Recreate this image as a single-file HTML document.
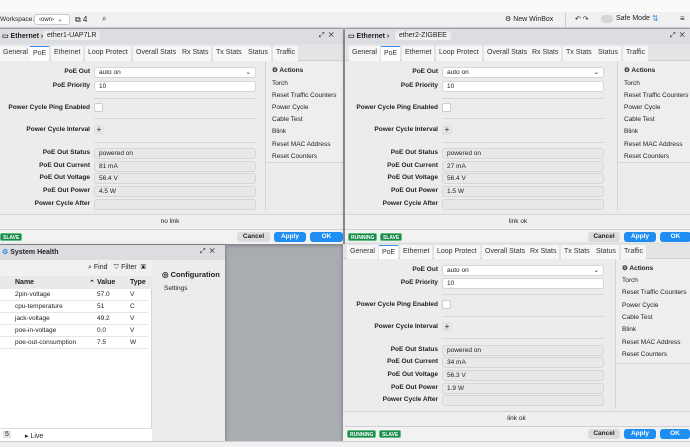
<!DOCTYPE html><html><head><meta charset="utf-8"><style>
*{box-sizing:border-box;margin:0;padding:0}
body{width:690px;height:447px;overflow:hidden;background:#a9adb2;font-family:"Liberation Sans",sans-serif;font-size:7px;color:#222;position:relative}
.a{position:absolute}
.win{position:absolute;width:346px;background:#ececed;box-shadow:0 1px 4px rgba(0,0,0,.35);overflow:hidden}
.tb{position:absolute;left:0;right:0;top:0;height:15px;background:#dcdde0;}
.tabs{position:absolute;left:0;right:0;height:17px;background:#e3e4e6;border-bottom:1px solid #d0d0d3}
.tab{position:absolute;top:2px;height:15px;line-height:14px;background:#f6f6f7;padding:0 3px;font-size:7px;color:#333}
.tab.on{background:#fff;border-top:1px solid #3a8ee6}
.lbl{position:absolute;right:253px;font-weight:bold;font-size:6.5px;text-align:right;white-space:nowrap;color:#222}
.f{position:absolute;left:97px;width:162px;height:11px;border:1px solid #d6d6d8;border-radius:3px;background:#e8e8e9;padding-left:4px;line-height:10px;font-size:6.5px}
.f.w{background:#fff}
.ln{position:absolute;left:97px;width:162px;height:1px;background:#d8d8da}
.act{position:absolute;left:268px;width:80px;border-left:1px solid #d5d5d7;border-bottom:1px solid #d5d5d7;background:#eeeeef}
.act div{position:absolute;left:6px;font-size:6.5px;white-space:nowrap}
.st{position:absolute;left:0;right:0;height:15px;border-top:1px solid #d6d6d8;text-align:center;line-height:14px;font-size:6.5px;background:#efeff0}
.ft{position:absolute;left:0;right:0;height:15px;border-top:1px solid #d0d0d2;background:#f2f2f3}
.btn{position:absolute;top:2px;height:10px;border-radius:3px;font-weight:bold;font-size:6.5px;text-align:center;line-height:10px;color:#fff;background:#1e8ef2}
.btn.c{background:#dcdcde;color:#222}
.bd{position:absolute;top:3px;height:8px;border-radius:2px;background:#1a8a4a;color:#fff;font-size:5px;font-weight:bold;line-height:8px;padding:0 2px;border:1px solid #5fbf83}
.chk{position:absolute;left:97px;width:9px;height:9px;background:#fff;border:1px solid #ccc;border-radius:2px}
.plus{position:absolute;left:97px;width:10px;height:10px;background:#e4e4e6;border-radius:2px;text-align:center;line-height:10px;font-size:8px}
</style></head><body>
<div class="a" style="left:0;top:0;width:690px;height:12px;background:#fafafa"></div>
<div class="a" style="left:0;top:12px;width:690px;height:16px;background:#f1f1f3;border-bottom:1px solid #d8d8da"></div>
<div class="a" style="left:0;top:16px;font-size:6.5px">Workspace:</div>
<div class="a" style="left:34px;top:14px;width:36px;height:11px;background:#fff;border:1px solid #ccc;border-radius:3px;font-size:6px;padding-left:4px;line-height:10px">‹own› &nbsp;⌄</div>
<div class="a" style="left:75px;top:15px;font-size:8px">⧉ 4</div>
<div class="a" style="left:102px;top:14px;font-size:8px">⌕</div>
<div class="a" style="left:505px;top:15px;font-size:7px">⚙ New WinBox</div>
<div class="a" style="left:565px;top:13px;width:1px;height:14px;background:#ccc"></div>
<div class="a" style="left:575px;top:15px;font-size:7px">↶ ↷</div>
<div class="a" style="left:601px;top:15px;width:12px;height:8px;border-radius:4px;background:#d6d6d8"></div>
<div class="a" style="left:616px;top:15px;font-size:7px">Safe Mode</div>
<div class="a" style="left:652px;top:14px;font-size:8px;color:#3a8ee6">⇅</div>
<div class="a" style="left:680px;top:14px;font-size:8px">≡</div>

<!-- win1 -->
<div class="win" style="left:-3px;top:29px;height:215px">
<div class="tb"><span class="a" style="left:5px;top:3px;font-weight:bold">▭ Ethernet ›</span><span class="a" style="left:46px;top:2px;background:#eee;padding:1px 4px;border-radius:3px">ether1-UAP7LR</span><span class="a" style="left:322px;top:3px">⤢ &nbsp;✕</span></div>
<div class="tabs" style="top:15px">
<div class="tab" style="left:3px">General</div><div class="tab on" style="left:33px">PoE</div><div class="tab" style="left:54px">Ethernet</div><div class="tab" style="left:88px">Loop Protect</div><div class="tab" style="left:136px">Overall Stats</div><div class="tab" style="left:182px">Rx Stats</div><div class="tab" style="left:216px">Tx Stats</div><div class="tab" style="left:248px">Status</div><div class="tab" style="left:276px">Traffic</div></div>
<div class="a" style="left:0;top:32px;width:346px;height:150px">
<div class="lbl" style="top:7px">PoE Out</div><div class="f w" style="top:6px">auto on<span style="float:right;margin-right:4px">⌄</span></div>
<div class="lbl" style="top:21px">PoE Priority</div><div class="f w" style="top:20px">10</div>
<div class="ln" style="top:37px"></div>
<div class="lbl" style="top:43px">Power Cycle Ping Enabled</div><div class="chk" style="top:42px"></div>
<div class="ln" style="top:57px"></div>
<div class="lbl" style="top:65px">Power Cycle Interval</div><div class="plus" style="top:64px">+</div>
<div class="ln" style="top:81px"></div>
<div class="lbl" style="top:88px">PoE Out Status</div><div class="f" style="top:87px">powered on</div>
<div class="lbl" style="top:101px">PoE Out Current</div><div class="f" style="top:100px">81 mA</div>
<div class="lbl" style="top:113px">PoE Out Voltage</div><div class="f" style="top:112px">56.4 V</div>
<div class="lbl" style="top:126px">PoE Out Power</div><div class="f" style="top:125px">4.5 W</div>
<div class="lbl" style="top:139px">Power Cycle After</div><div class="f" style="top:138px"></div>
<div class="act" style="top:0;height:102px"><div style="top:5px;font-weight:bold">⚙ Actions</div><div style="top:19px">Torch</div><div style="top:31px">Reset Traffic Counters</div><div style="top:43px">Power Cycle</div><div style="top:55px">Cable Test</div><div style="top:67px">Blink</div><div style="top:80px">Reset MAC Address</div><div style="top:92px">Reset Counters</div></div>
<div class="a" style="left:268px;top:102px;width:1px;height:48px;background:#d5d5d7"></div>
</div>
<div class="st" style="top:185px">no link</div>
<div class="ft" style="top:200px"><div class="bd" style="left:3px">SLAVE</div><div class="btn c" style="left:240px;width:33px">Cancel</div><div class="btn" style="left:277px;width:32px">Apply</div><div class="btn" style="left:313px;width:33px">OK</div></div>
</div>

<!-- win2 -->
<div class="win" style="left:345px;top:29px;height:215px">
<div class="tb"><span class="a" style="left:3px;top:3px;font-weight:bold">▭ Ethernet ›</span><span class="a" style="left:50px;top:2px;background:#eee;padding:1px 4px;border-radius:3px">ether2-ZIGBEE</span><span class="a" style="left:325px;top:3px">⤢ &nbsp;✕</span></div>
<div class="tabs" style="top:15px">
<div class="tab" style="left:4px">General</div><div class="tab on" style="left:36px">PoE</div><div class="tab" style="left:57px">Ethernet</div><div class="tab" style="left:91px">Loop Protect</div><div class="tab" style="left:139px">Overall Stats</div><div class="tab" style="left:184px">Rx Stats</div><div class="tab" style="left:218px">Tx Stats</div><div class="tab" style="left:250px">Status</div><div class="tab" style="left:278px">Traffic</div></div>
<div class="a" style="left:0;top:32px;width:346px;height:150px">
<div class="lbl" style="top:7px">PoE Out</div><div class="f w" style="top:6px">auto on<span style="float:right;margin-right:4px">⌄</span></div>
<div class="lbl" style="top:21px">PoE Priority</div><div class="f w" style="top:20px">10</div>
<div class="ln" style="top:37px"></div>
<div class="lbl" style="top:43px">Power Cycle Ping Enabled</div><div class="chk" style="top:42px"></div>
<div class="ln" style="top:57px"></div>
<div class="lbl" style="top:65px">Power Cycle Interval</div><div class="plus" style="top:64px">+</div>
<div class="ln" style="top:81px"></div>
<div class="lbl" style="top:88px">PoE Out Status</div><div class="f" style="top:87px">powered on</div>
<div class="lbl" style="top:101px">PoE Out Current</div><div class="f" style="top:100px">27 mA</div>
<div class="lbl" style="top:113px">PoE Out Voltage</div><div class="f" style="top:112px">56.4 V</div>
<div class="lbl" style="top:126px">PoE Out Power</div><div class="f" style="top:125px">1.5 W</div>
<div class="lbl" style="top:139px">Power Cycle After</div><div class="f" style="top:138px"></div>
<div class="act" style="left:272px;top:0;height:102px"><div style="top:5px;font-weight:bold">⚙ Actions</div><div style="top:19px">Torch</div><div style="top:31px">Reset Traffic Counters</div><div style="top:43px">Power Cycle</div><div style="top:55px">Cable Test</div><div style="top:67px">Blink</div><div style="top:80px">Reset MAC Address</div><div style="top:92px">Reset Counters</div></div>
<div class="a" style="left:272px;top:102px;width:1px;height:48px;background:#d5d5d7"></div>
</div>
<div class="st" style="top:185px">link ok</div>
<div class="ft" style="top:200px"><div class="bd" style="left:3px">RUNNING</div><div class="bd" style="left:35px">SLAVE</div><div class="btn c" style="left:243px;width:32px">Cancel</div><div class="btn" style="left:279px;width:32px">Apply</div><div class="btn" style="left:315px;width:31px">OK</div></div>
</div>

<!-- system health -->
<div class="win" style="left:0;top:245px;width:225px;height:196px;background:#ececed">
<div class="tb"><span class="a" style="left:2px;top:3px;font-weight:bold"><span style="color:#3a8ee6">⚙</span> System Health</span><span class="a" style="left:200px;top:3px">⤢ &nbsp;✕</span></div>
<div class="a" style="left:0;top:15px;width:152px;height:168px;background:#fff;border-right:1px solid #d5d5d7">
<div class="a" style="left:0;top:0;width:152px;height:16px;background:#f1f1f2"></div>
<div class="a" style="left:88px;top:4px">⌕ Find &nbsp;&nbsp;▽ Filter &nbsp;▣</div>
<div class="a" style="left:0;top:16px;width:152px;height:13px;background:#e9e9ea;font-weight:bold"><span class="a" style="left:15px;top:3px">Name</span><span class="a" style="left:89px;top:3px">⌃</span><span class="a" style="left:97px;top:3px">Value</span><span class="a" style="left:130px;top:3px">Type</span></div>
<div class="a" style="left:0;top:29px;width:148px;font-size:6.5px">
<div style="height:12px;border-bottom:1px solid #e5e5e5;position:relative"><span class="a" style="left:15px;top:2px">2pin-voltage</span><span class="a" style="left:97px;top:2px">57.0</span><span class="a" style="left:130px;top:2px">V</span></div>
<div style="height:12px;border-bottom:1px solid #e5e5e5;position:relative"><span class="a" style="left:15px;top:2px">cpu-temperature</span><span class="a" style="left:97px;top:2px">51</span><span class="a" style="left:130px;top:2px">C</span></div>
<div style="height:12px;border-bottom:1px solid #e5e5e5;position:relative"><span class="a" style="left:15px;top:2px">jack-voltage</span><span class="a" style="left:97px;top:2px">49.2</span><span class="a" style="left:130px;top:2px">V</span></div>
<div style="height:12px;border-bottom:1px solid #e5e5e5;position:relative"><span class="a" style="left:15px;top:2px">poe-in-voltage</span><span class="a" style="left:97px;top:2px">0.0</span><span class="a" style="left:130px;top:2px">V</span></div>
<div style="height:12px;border-bottom:1px solid #e5e5e5;position:relative"><span class="a" style="left:15px;top:2px">poe-out-consumption</span><span class="a" style="left:97px;top:2px">7.5</span><span class="a" style="left:130px;top:2px">W</span></div>
</div></div>
<div class="a" style="left:162px;top:25px;font-weight:bold;font-size:7.5px">◎ Configuration</div>
<div class="a" style="left:164px;top:40px;font-size:6.5px">Settings</div>
<div class="a" style="left:0;top:183px;width:152px;height:13px;background:#fff;border-top:1px solid #ddd"><span class="a" style="left:3px;top:2px;background:#e4e4e6;padding:0 2px">5</span><span class="a" style="left:25px;top:3px">▸ Live</span></div>
</div>

<!-- lower right -->
<div class="win" style="left:343px;top:244px;width:347px;height:197px">
<div class="tabs" style="top:0;height:15px"><div class="tab" style="left:4px;top:1px;height:14px">General</div><div class="tab on" style="left:36px;top:1px;height:14px">PoE</div><div class="tab" style="left:57px;top:1px;height:14px">Ethernet</div><div class="tab" style="left:91px;top:1px;height:14px">Loop Protect</div><div class="tab" style="left:139px;top:1px;height:14px">Overall Stats</div><div class="tab" style="left:184px;top:1px;height:14px">Rx Stats</div><div class="tab" style="left:218px;top:1px;height:14px">Tx Stats</div><div class="tab" style="left:250px;top:1px;height:14px">Status</div><div class="tab" style="left:278px;top:1px;height:14px">Traffic</div></div>
<div class="a" style="left:2px;top:15px;width:346px;height:150px">
<div class="lbl" style="top:7px">PoE Out</div><div class="f w" style="top:6px">auto on<span style="float:right;margin-right:4px">⌄</span></div>
<div class="lbl" style="top:20px">PoE Priority</div><div class="f w" style="top:19px">10</div>
<div class="ln" style="top:35px"></div>
<div class="lbl" style="top:42px">Power Cycle Ping Enabled</div><div class="chk" style="top:41px"></div>
<div class="ln" style="top:57px"></div>
<div class="lbl" style="top:64px">Power Cycle Interval</div><div class="plus" style="top:63px">+</div>
<div class="ln" style="top:79px"></div>
<div class="lbl" style="top:87px">PoE Out Status</div><div class="f" style="top:86px">powered on</div>
<div class="lbl" style="top:99px">PoE Out Current</div><div class="f" style="top:98px">34 mA</div>
<div class="lbl" style="top:112px">PoE Out Voltage</div><div class="f" style="top:111px">56.3 V</div>
<div class="lbl" style="top:125px">PoE Out Power</div><div class="f" style="top:124px">1.9 W</div>
<div class="lbl" style="top:137px">Power Cycle After</div><div class="f" style="top:136px"></div>
<div class="act" style="left:270px;top:0;height:105px"><div style="top:5px;font-weight:bold">⚙ Actions</div><div style="top:18px">Torch</div><div style="top:30px">Reset Traffic Counters</div><div style="top:43px">Power Cycle</div><div style="top:55px">Cable Test</div><div style="top:67px">Blink</div><div style="top:80px">Reset MAC Address</div><div style="top:92px">Reset Counters</div></div>
<div class="a" style="left:270px;top:105px;width:1px;height:45px;background:#d5d5d7"></div>
</div>
<div class="st" style="top:167px">link ok</div>
<div class="ft" style="top:182px"><div class="bd" style="left:4px">RUNNING</div><div class="bd" style="left:36px">SLAVE</div><div class="btn c" style="left:245px;width:32px">Cancel</div><div class="btn" style="left:281px;width:32px">Apply</div><div class="btn" style="left:317px;width:30px">OK</div></div>
</div>
<div class="a" style="left:0;top:441px;width:690px;height:6px;background:#eef0f2;border-top:1px solid #ccc"></div>
</body></html>
